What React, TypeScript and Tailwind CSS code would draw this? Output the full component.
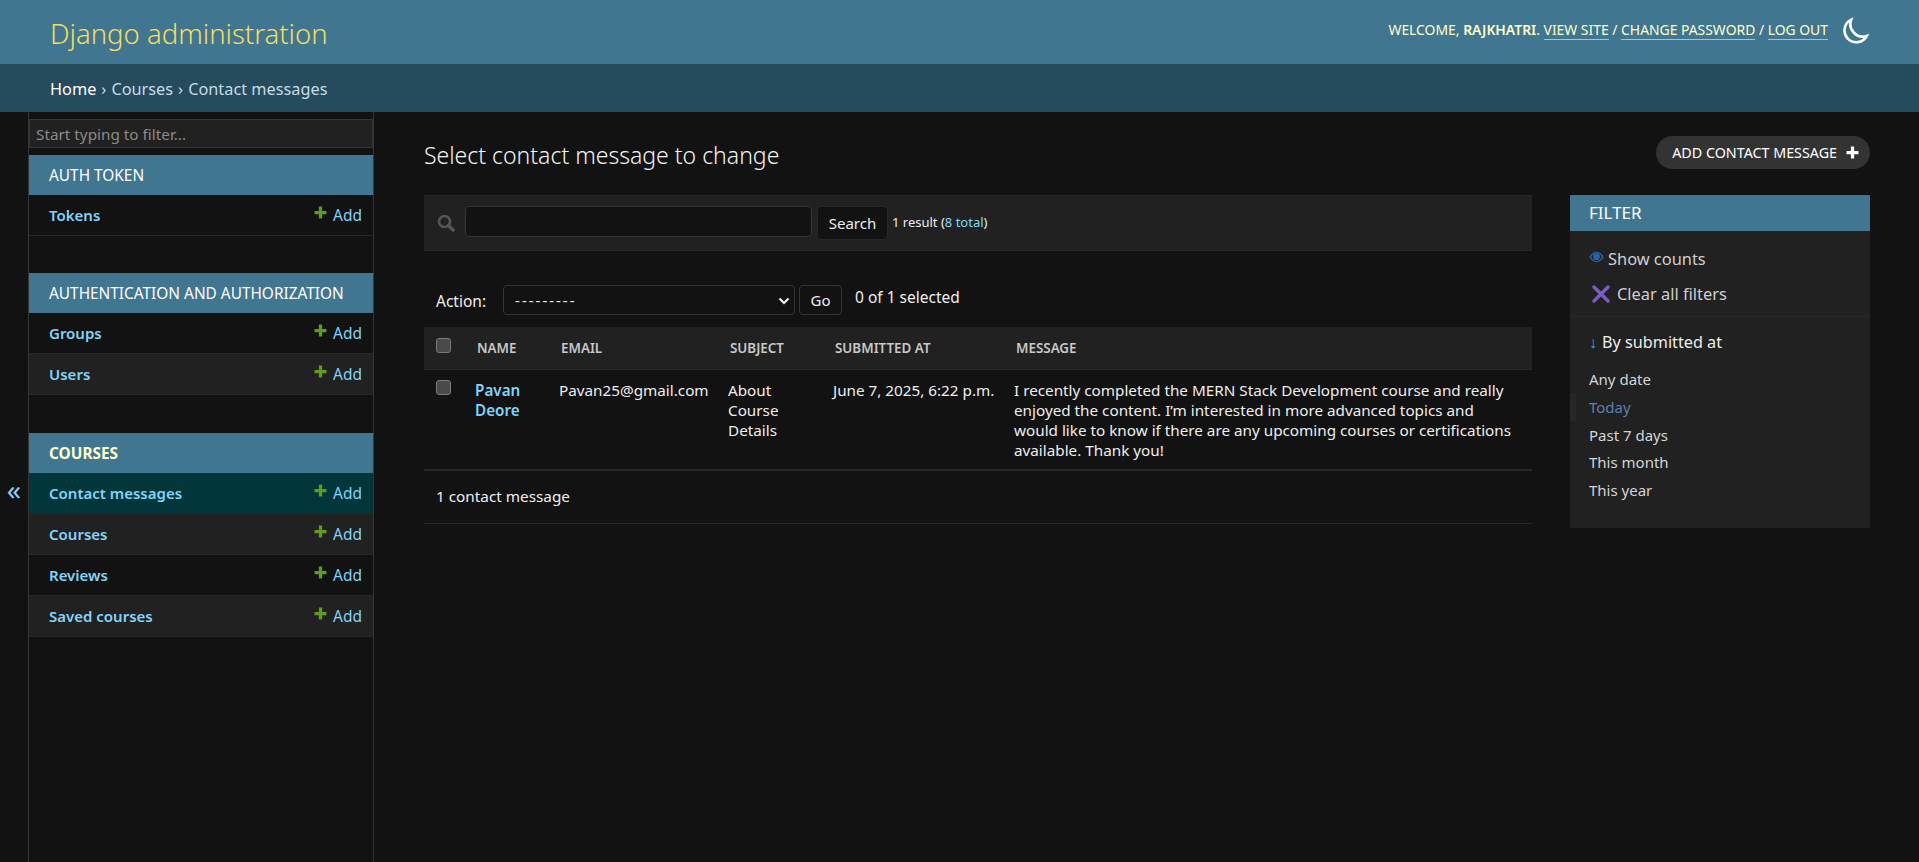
const appRows = [
  { name: "Contact messages", bg: "bg-[#00363a]" },
  { name: "Courses", bg: "bg-[#212121]" },
  { name: "Reviews", bg: "bg-[#121212]" },
  { name: "Saved courses", bg: "bg-[#212121]" },
];

function Plus({ className }: { className: string }) {
  return (
    <svg viewBox="0 0 12 12" className={className} fill="currentColor">
      <path d="M4.5 0.5h3v4h4v3h-4v4h-3v-4h-4v-3h4z" />
    </svg>
  );
}

function Row({ name, bg }: { name: string; bg: string }) {
  return (
    <div className={`flex h-[41px] items-center justify-between border-b border-[#272727] pl-[20px] pr-[11px] ${bg}`}>
      <span className="text-[15px] font-semibold text-[#81d4fa]">{name}</span>
      <span className="flex items-center pt-[2px] text-[15.5px] text-[#81d4fa]">
        <Plus className="mr-[6px] mb-[7px] h-[13px] w-[13px] text-[#5e9c1a]" />
        Add
      </span>
    </div>
  );
}

function Head({ children, bold }: { children: string; bold?: boolean }) {
  return (
    <div className={`flex h-[40px] items-center bg-[#417690] pl-[20px] pt-[1px] text-[15.4px] ${bold ? "font-bold text-[#ffffcc]" : "text-white"}`}>
      {children}
    </div>
  );
}

export default function App() {
  return (
    <div className="flex min-h-[862px] flex-col bg-[#121212] font-['Noto_Sans','Open_Sans',sans-serif] text-[#eeeeee]">
      <header className="flex h-[64px] items-center justify-between bg-[#417690] pl-[50px] pr-[50px]">
        <div className="mt-[3px] text-[27.5px] font-light text-[#f5dd5d]">Django administration</div>
        <div className="flex items-center">
          <div className="mb-[4px] text-[13.9px] uppercase text-[#ffffcc]">
            Welcome, <strong className="font-semibold">rajkhatri</strong>.{" "}
            <a className="border-b border-[#a9c2cf]">View site</a> /{" "}
            <a className="border-b border-[#a9c2cf]">Change password</a> /{" "}
            <a className="border-b border-[#a9c2cf]">Log out</a>
          </div>
          <svg viewBox="0 0 26 26" className="mb-[2px] ml-[13px] h-[28px] w-[28px]" fill="none" stroke="white" strokeWidth="2.4">
            <path d="M9.5 2.5 A11 11 0 1 0 24 17.5 A11.5 11.5 0 0 1 9.5 2.5 Z" />
          </svg>
        </div>
      </header>
      <nav className="flex h-[48px] items-center bg-[#264b5d] pl-[50px] pt-[3px] text-[16.3px] text-[#c4dce8]">
        <a className="text-white">Home</a>
        <span className="mx-[5px]">›</span>
        <a>Courses</a>
        <span className="mx-[5px]">›</span>
        Contact messages
      </nav>
      <div className="flex flex-1">
        <button className="flex w-[29px] shrink-0 items-start justify-center border-r border-[#353535] pt-[362px] text-[28px] leading-[30px] text-[#81d4fa]">
          «
        </button>
        <aside className="w-[345px] shrink-0 border-r border-[#353535]">
          <div className="pt-[7px]">
            <input
              placeholder="Start typing to filter..."
              className="block h-[29px] w-full border border-[#353535] bg-[#212121] px-[6px] text-[15.3px] text-[#eeeeee] outline-none placeholder:text-[#8a8a8a]"
            />
          </div>
          <div className="mt-[7px]">
            <Head>AUTH TOKEN</Head>
            <Row name="Tokens" bg="bg-[#121212]" />
          </div>
          <div className="mt-[37px]">
            <Head>AUTHENTICATION AND AUTHORIZATION</Head>
            <Row name="Groups" bg="bg-[#121212]" />
            <Row name="Users" bg="bg-[#212121]" />
          </div>
          <div className="mt-[38px]">
            <Head bold>COURSES</Head>
            {appRows.map((r) => (
              <Row key={r.name} name={r.name} bg={r.bg} />
            ))}
          </div>
        </aside>
        <main className="flex min-w-0 flex-1 flex-col pl-[50px] pr-[49px]">
          <div className="flex h-[83px] items-start justify-between">
            <h1 className="mt-[26px] text-[23px] font-light leading-[34px] text-[#f2f2f2]">Select contact message to change</h1>
            <a className="mt-[24px] flex h-[33px] items-center rounded-full bg-[#333333] pl-[16px] pr-[11px] text-[14.3px] uppercase text-white">
              Add contact message
              <Plus className="ml-[9px] h-[13px] w-[13px] text-white" />
            </a>
          </div>
          <div className="flex gap-[38px]">
            <div className="min-w-0 flex-1">
              <div className="flex h-[56px] items-start border-y border-[#272727] bg-[#212121] pl-[13px] pt-[10px]">
                <svg viewBox="0 0 18 18" className="mt-[8px] h-[18px] w-[18px] text-[#555555]" fill="none" stroke="currentColor">
                  <circle cx="7.5" cy="7.5" r="5.5" strokeWidth="2.6" />
                  <path d="M11.5 11.5 L16 16" strokeWidth="3.4" strokeLinecap="round" />
                </svg>
                <input className="ml-[10px] h-[31px] w-[347px] rounded-[4px] border border-[#353535] bg-[#121212] outline-none" />
                <button className="ml-[5px] h-[34px] w-[71px] rounded-[4px] border border-[#272727] bg-[#121212] text-[15px] text-[#eeeeee]">Search</button>
                <span className="ml-[4px] mt-[7px] text-[13px] text-[#eeeeee]">
                  1 result (<a className="text-[#81d4fa]">8 total</a>)
                </span>
              </div>
              <div className="mt-[34px] flex h-[42px] items-start pl-[12px]">
                <label className="mt-[5px] text-[15.5px] leading-[22px]">Action:</label>
                <div className="relative ml-[17px] h-[30px] w-[292px]">
                  <select className="h-full w-full appearance-none rounded-[4px] border border-[#353535] bg-[#121212] pl-[11px] text-[15px] tracking-[2px] text-[#eeeeee] outline-none">
                    <option>---------</option>
                  </select>
                  <svg viewBox="0 0 12 8" className="pointer-events-none absolute right-[5px] top-[12px] h-[8px] w-[12px]" fill="none" stroke="#eeeeee" strokeWidth="2.2">
                    <path d="M1.5 1.5 L6 6 L10.5 1.5" />
                  </svg>
                </div>
                <button className="ml-[4px] h-[30px] w-[43px] rounded-[4px] border border-[#353535] bg-[#121212] text-[15px]">Go</button>
                <span className="ml-[13px] mt-[1px] text-[15.5px] leading-[22px]">0 of 1 selected</span>
              </div>
              <table className="w-full table-fixed border-collapse">
                <colgroup>
                  <col className="w-[43px]" />
                  <col className="w-[84px]" />
                  <col className="w-[169px]" />
                  <col className="w-[105px]" />
                  <col className="w-[181px]" />
                  <col />
                </colgroup>
                <thead>
                  <tr className="h-[42px] border-b border-[#272727] bg-[#212121] text-left text-[13.4px] font-semibold text-[#c8c8c8]">
                    <th className="pl-[12px] align-top pt-[11px] font-semibold">
                      <span className="block h-[15px] w-[15px] rounded-[3px] border border-[#7a7a7a] bg-[#4a4a4a]" />
                    </th>
                    <th className="pl-[10px] font-semibold">NAME</th>
                    <th className="pl-[10px] font-semibold">EMAIL</th>
                    <th className="pl-[10px] font-semibold">SUBJECT</th>
                    <th className="pl-[10px] font-semibold">SUBMITTED AT</th>
                    <th className="pl-[10px] font-semibold">MESSAGE</th>
                  </tr>
                </thead>
                <tbody>
                  <tr className="border-b-2 border-[#272727] text-[15.25px] leading-[20px]">
                    <td className="pl-[12px] pt-[10px] pb-[9px] align-top">
                      <span className="block h-[15px] w-[15px] rounded-[3px] border border-[#7a7a7a] bg-[#4a4a4a]" />
                    </td>
                    <td className="pl-[8px] pt-[10px] pb-[9px] align-top font-semibold text-[#81d4fa]">Pavan Deore</td>
                    <td className="pl-[8px] pt-[10px] pb-[9px] align-top">Pavan25@gmail.com</td>
                    <td className="pl-[8px] pr-[8px] pt-[10px] pb-[9px] align-top">About Course Details</td>
                    <td className="pl-[8px] pt-[10px] pb-[9px] align-top">June 7, 2025, 6:22 p.m.</td>
                    <td className="pl-[8px] pr-[14px] pt-[10px] pb-[9px] align-top">
                      I recently completed the MERN Stack Development course and really enjoyed the content. I’m interested in more advanced topics and would like to know if there are any upcoming courses or certifications available. Thank you!
                    </td>
                  </tr>
                </tbody>
              </table>
              <div className="flex h-[53px] items-center border-b border-[#272727] pl-[12px] text-[15.3px]">1 contact message</div>
            </div>
            <div className="h-[333px] w-[300px] shrink-0 bg-[#212121]">
              <div className="flex h-[36px] items-center bg-[#417690] pl-[19px] text-[17px] text-white">FILTER</div>
              <div className="flex h-[86px] flex-col border-b border-[#272727] pl-[19px]">
                <div className="mt-[14px] flex h-[28px] items-center text-[16.4px] text-[#cfcfcf]">
                  <svg viewBox="0 0 16 12" className="mb-[5px] mr-[4px] h-[12px] w-[15px]">
                    <path d="M0.3 6 C3 1.5 5.5 0.3 8 0.3 C10.5 0.3 13 1.5 15.7 6 C13 10 10.5 11.7 8 11.7 C5.5 11.7 3 10 0.3 6 Z M2.2 6 C4 9 6 10.4 8 10.4 C10 10.4 12 9 13.8 6 C12 3 10 1.6 8 1.6 C6 1.6 4 3 2.2 6 Z" fill="#2a62a8" fillRule="evenodd" />
                    <circle cx="8" cy="5.6" r="3.6" fill="#2a62a8" />
                  </svg>
                  Show counts
                </div>
                <div className="mt-[7px] flex h-[28px] items-center text-[16.4px] text-[#cfcfcf]">
                  <svg viewBox="0 0 18 18" className="ml-[3px] mr-[7px] h-[18px] w-[18px]">
                    <path d="M2 2 L16 16 M16 2 L2 16" stroke="#7b5cc4" strokeWidth="3.4" strokeLinecap="round" />
                  </svg>
                  Clear all filters
                </div>
              </div>
              <div className="mt-[11px] flex h-[28px] items-center pl-[19px] text-[16.2px] text-[#eeeeee]">
                <span className="mr-[5px] font-semibold text-[#2aa7e0]">↓</span>By submitted at
              </div>
              <ul className="mt-[9px] text-[15px] text-[#d4d4d4]">
                <li className="flex h-[28px] items-center pl-[19px]">Any date</li>
                <li className="flex h-[28px] items-center border-l-[6px] border-[#272727] pl-[13px] text-[#5b80b2]">Today</li>
                <li className="flex h-[27.5px] items-center pl-[19px]">Past 7 days</li>
                <li className="flex h-[27.5px] items-center pl-[19px]">This month</li>
                <li className="flex h-[27.5px] items-center pl-[19px]">This year</li>
              </ul>
            </div>
          </div>
        </main>
      </div>
    </div>
  );
}
